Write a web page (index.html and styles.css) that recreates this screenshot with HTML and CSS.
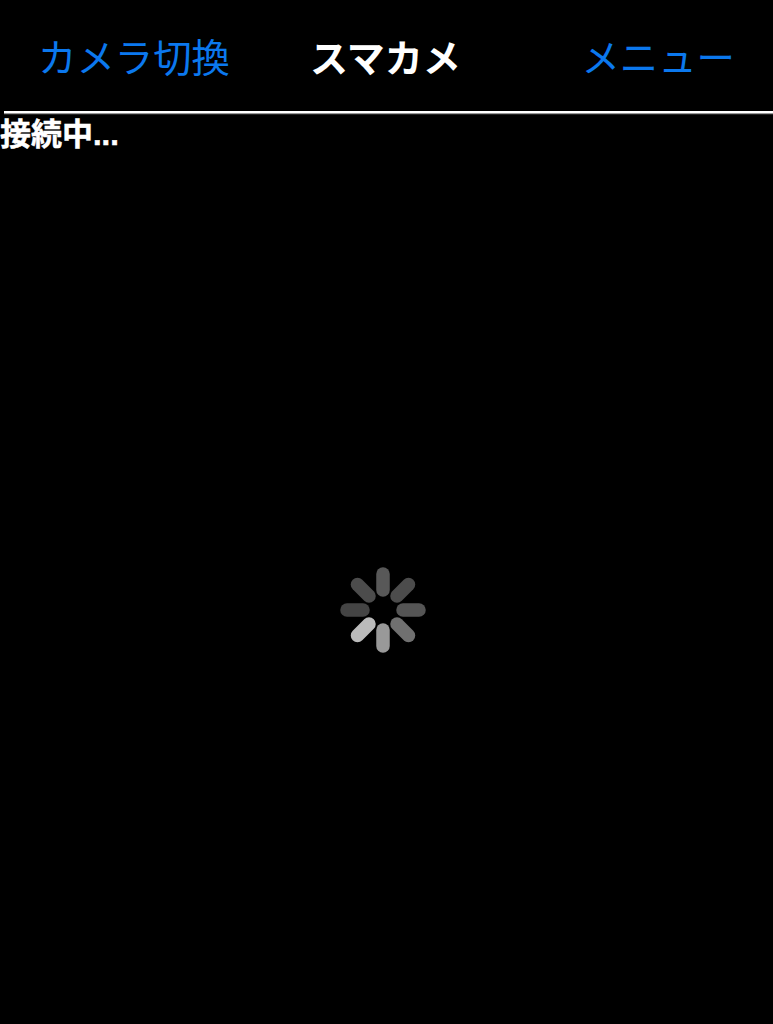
FILE: index.html
```html
<!DOCTYPE html>
<html lang="ja">
<head>
<meta charset="utf-8">
<title>スマカメ</title>
<link rel="stylesheet" href="styles.css">
</head>
<body>
<header class="nav">
  <a class="nav-btn">カメラ切換</a>
  <h1 class="nav-title">スマカメ</h1>
  <a class="nav-btn nav-btn-end">メニュー</a>
</header>
<hr class="rule">
<p class="status">接続中...</p>
<svg class="spinner" viewBox="0 0 86 86" width="86" height="86" aria-hidden="true">
  <g stroke-width="13.5" stroke-linecap="round">
    <line x1="43" y1="7" x2="43" y2="23" stroke="#585858"/>
    <line x1="68.5" y1="17.5" x2="57" y2="29" stroke="#4c4c4c"/>
    <line x1="79" y1="43" x2="63" y2="43" stroke="#555"/>
    <line x1="68.5" y1="68.5" x2="57" y2="57" stroke="#707070"/>
    <line x1="43" y1="79" x2="43" y2="63" stroke="#999"/>
    <line x1="17.5" y1="68.5" x2="29" y2="57" stroke="#bbb"/>
    <line x1="7" y1="43" x2="23" y2="43" stroke="#444"/>
    <line x1="17.5" y1="17.5" x2="29" y2="29" stroke="#4c4c4c"/>
  </g>
</svg>
</body>
</html>
```

FILE: styles.css
```css
html, body {
  margin: 0;
  padding: 0;
  height: 100%;
  background: #000;
  overflow: hidden;
}
body {
  position: relative;
  font-family: "Liberation Sans", "Noto Sans CJK JP", sans-serif;
  color: #fff;
}
.nav {
  display: flex;
  align-items: center;
  gap: 80px;
  height: 110px;
  padding: 0 38px;
  box-sizing: border-box;
  font-size: 38.4px;
}
.nav-btn {
  color: #0b78ee;
  font-weight: 400;
}
.nav-btn-end {
  margin-left: auto;
}
.nav-title {
  margin: 0;
  font-size: 38px;
  font-weight: 700;
  color: #fff;
}
.rule {
  margin: 1px 0 0 4px;
  height: 2px;
  border: 0;
  background: #fff;
  box-shadow: 0 1px 0 #999, 0 2px 0 #222;
}
.status {
  margin: 5px 0 0;
  font-size: 31px;
  line-height: 34px;
  font-weight: 700;
  -webkit-text-stroke: 0.5px #fff;
}
.spinner {
  position: absolute;
  left: 339.5px;
  top: 567px;
}
```
